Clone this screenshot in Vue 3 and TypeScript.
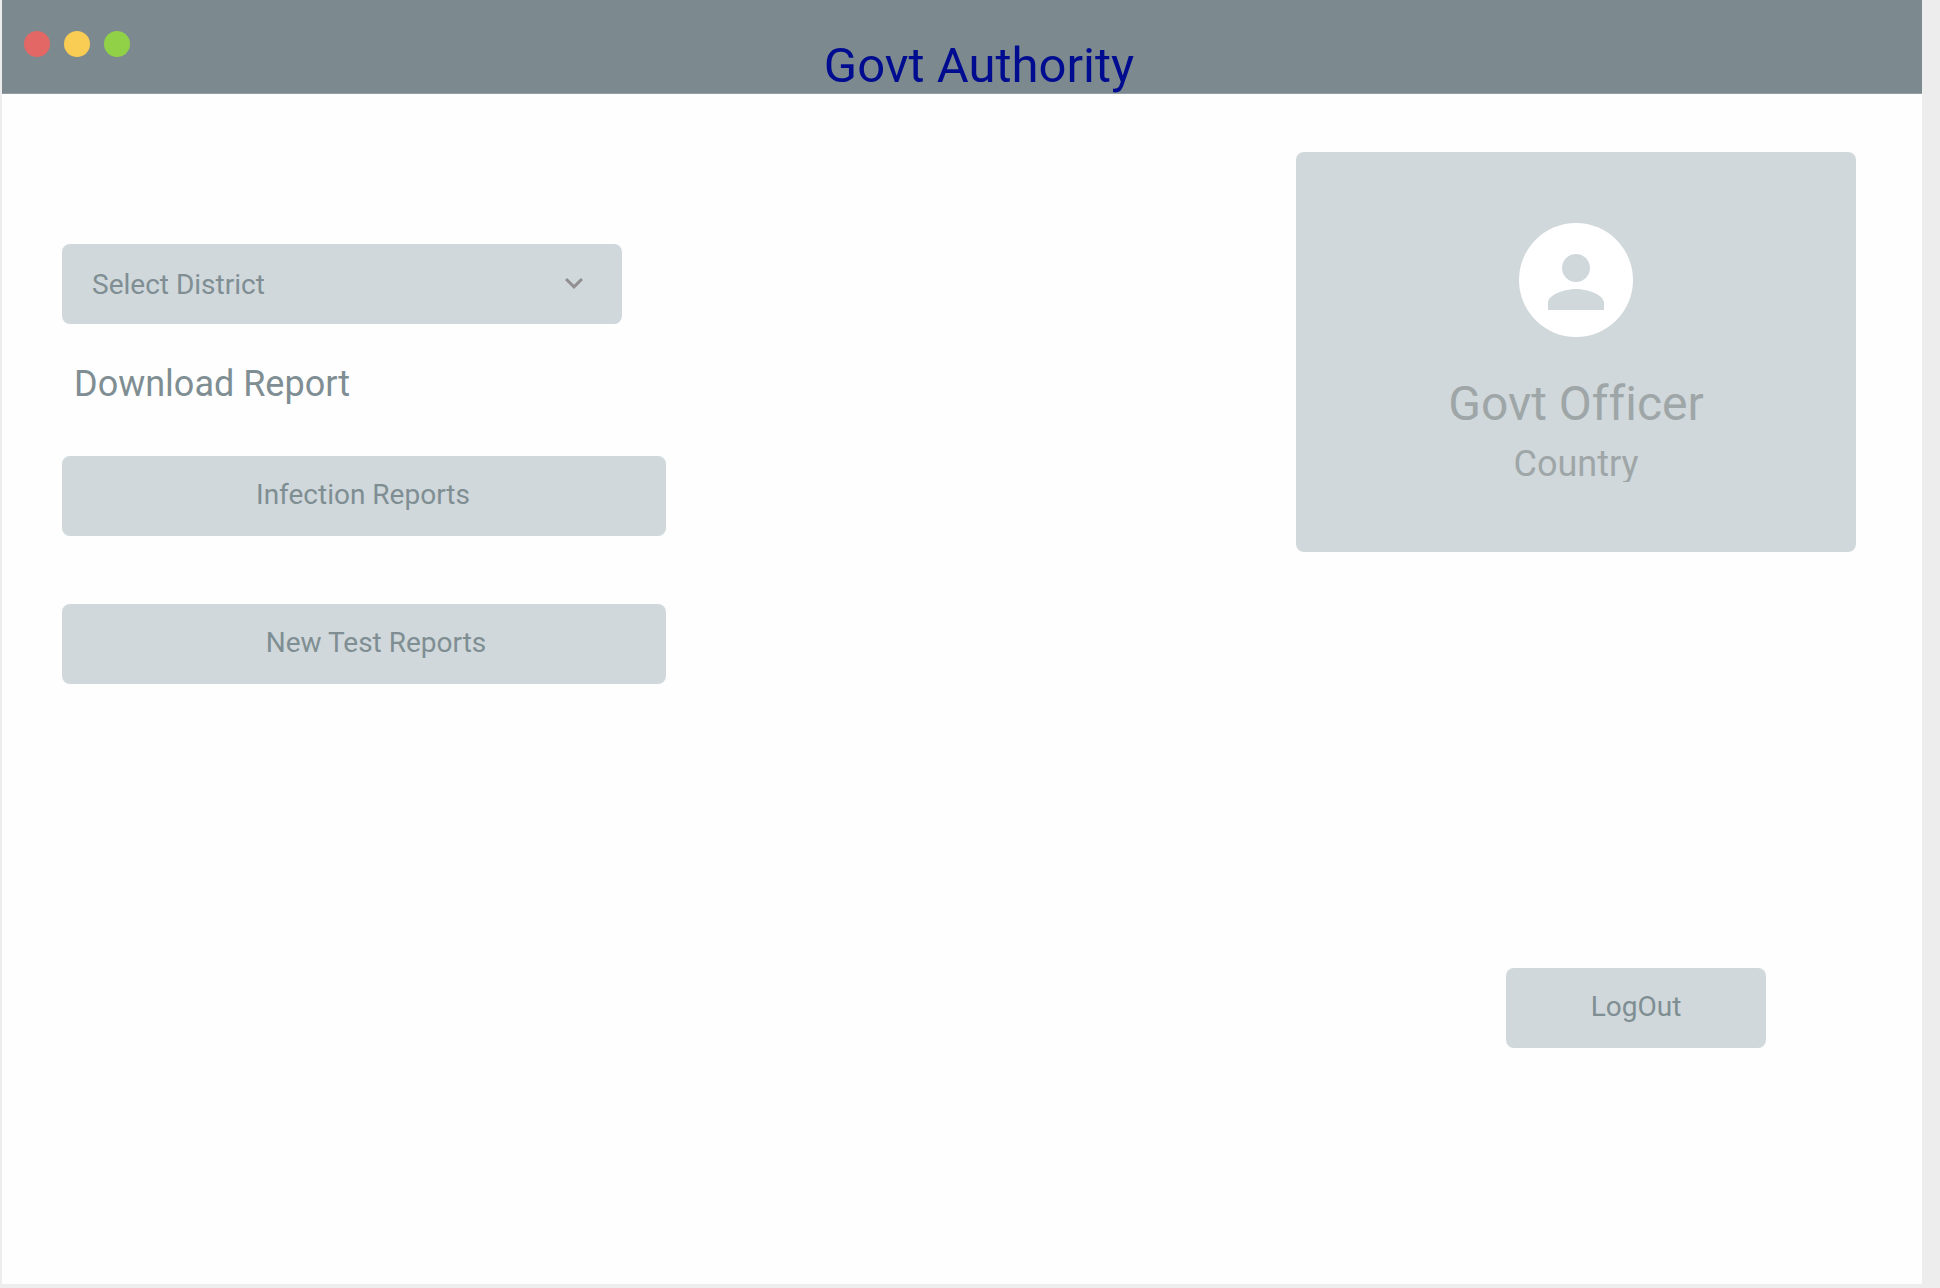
<script setup lang="ts">
import { ref } from 'vue'

const district = ref('')
const districts: string[] = ['North', 'South', 'East', 'West']
</script>

<template>
  <div class="window">
    <header class="title-bar">
      <div class="lights">
        <span class="light red"></span>
        <span class="light yellow"></span>
        <span class="light green"></span>
      </div>
      <h1>Govt Authority</h1>
    </header>

    <main class="content">
      <section class="reports">
        <div class="select-box">
          <select v-model="district" aria-label="Select District">
            <option value="">Select District</option>
            <option v-for="name in districts" :key="name" :value="name">{{ name }}</option>
          </select>
          <svg class="chevron" viewBox="0 0 24 24" aria-hidden="true">
            <path d="M16.59 8.59L12 13.17 7.41 8.59 6 10l6 6 6-6z" />
          </svg>
        </div>
        <h2>Download Report</h2>
        <button type="button" class="btn infection">Infection Reports</button>
        <button type="button" class="btn tests">New Test Reports</button>
      </section>

      <aside class="account">
        <div class="card">
          <svg class="avatar" viewBox="0 0 114 114" aria-hidden="true">
            <circle cx="57" cy="57" r="57" fill="#fff" />
            <path
              transform="translate(15 17) scale(3.5)"
              fill="#d0d8db"
              d="M12 12c2.21 0 4-1.79 4-4s-1.79-4-4-4-4 1.79-4 4 1.79 4 4 4zm0 2c-2.67 0-8 1.34-8 4v2h16v-2c0-2.66-5.33-4-8-4z"
            />
          </svg>
          <p class="name">Govt Officer</p>
          <p class="place">Country</p>
        </div>
        <button type="button" class="btn logout">LogOut</button>
      </aside>
    </main>
  </div>
</template>

<style>
body {
  margin: 0;
  background: #ededed;
}
</style>

<style scoped>
* {
  box-sizing: border-box;
}

.window {
  display: flex;
  flex-direction: column;
  min-height: calc(100vh - 4px);
  margin: 0 18px 4px 2px;
  background: #fefefe;
  color: #7f8e93;
  font-family: Roboto, "Liberation Sans", sans-serif;
  font-variant-ligatures: none;
}

.title-bar {
  display: flex;
  height: 94px;
  padding: 0 94px 0 22px;
  background: #7c8a8f;
  border-bottom: 1px solid #919ea3;
}

.lights {
  display: flex;
  gap: 14px;
  padding-top: 31px;
}

.light {
  width: 26px;
  height: 26px;
  border-radius: 50%;
}

.red {
  background: #e36865;
}

.yellow {
  background: #f9cd53;
}

.green {
  background: #91d148;
}

h1 {
  flex: 1;
  margin: 0;
  padding-top: 37px;
  color: #000c90;
  font-size: 49px;
  font-weight: 400;
  line-height: 57px;
  text-align: center;
}

.content {
  display: flex;
  justify-content: space-between;
  padding: 58px 66px 58px 60px;
}

.reports {
  display: flex;
  flex-direction: column;
  width: 604px;
  padding-top: 92px;
}

.select-box {
  display: grid;
  align-items: center;
  width: 560px;
}

.select-box > * {
  grid-area: 1 / 1;
}

select {
  appearance: none;
  width: 100%;
  height: 80px;
  padding: 0 80px 0 30px;
  border: 0;
  border-radius: 8px;
  background: #d0d8db;
  color: #7f8e93;
  font-family: inherit;
  font-size: 28px;
}

.chevron {
  justify-self: end;
  width: 36px;
  height: 36px;
  margin: 0 30px 2px 0;
  fill: #918f8f;
  pointer-events: none;
}

h2 {
  margin: 38px 0 50px 12px;
  font-size: 36px;
  font-weight: 400;
  line-height: 44px;
}

.btn {
  height: 80px;
  padding: 0 0 4px;
  border: 0;
  border-radius: 8px;
  background: #d0d8db;
  color: #7f8e93;
  font-family: inherit;
  font-size: 28px;
}

.infection {
  padding-right: 2px;
}

.tests {
  margin-top: 68px;
  padding-left: 24px;
}

.account {
  display: flex;
  flex-direction: column;
  width: 560px;
}

.card {
  display: flex;
  flex-direction: column;
  align-items: center;
  height: 400px;
  padding-top: 71px;
  border-radius: 8px;
  background: #d0d8db;
  color: #9fa6a8;
}

.avatar {
  width: 114px;
  height: 114px;
}

.name {
  margin: 39px 0 0;
  font-size: 48px;
  line-height: 56px;
}

.place {
  margin: 14px 0 0;
  overflow: hidden;
  font-size: 36px;
  line-height: 36px;
}

.logout {
  align-self: flex-end;
  width: 260px;
  margin: 416px 90px 0 0;
}
</style>
